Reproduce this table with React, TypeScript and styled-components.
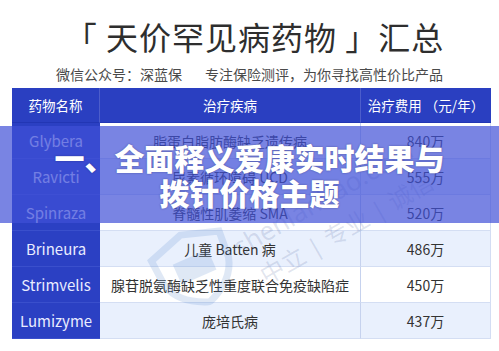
import React from 'react'
import styled, { createGlobalStyle } from 'styled-components'

type Row = {
  readonly name: string
  readonly disease: string
  readonly cost: string
}

const rows: Row[] = [
  { name: 'Glybera', disease: '脂蛋白脂肪酶缺乏遗传病', cost: '840万' },
  { name: 'Ravicti', disease: '尿素循环障碍 UCD', cost: '555万' },
  { name: 'Spinraza', disease: '脊髓性肌萎缩 SMA', cost: '520万' },
  { name: 'Brineura', disease: '儿童 Batten 病', cost: '486万' },
  { name: 'Strimvelis', disease: '腺苷脱氨酶缺乏性重度联合免疫缺陷症', cost: '450万' },
  { name: 'Lumizyme', disease: '庞培氏病', cost: '437万' }
]

const GlobalStyle = createGlobalStyle`
  html, body {
    margin: 0;
    padding: 0;
    background: #fff;
  }
  body {
    font-family: "Noto Sans CJK SC", "Noto Sans", sans-serif;
  }
`

const Page = styled.div`
  position: relative;
  width: 499px;
  height: 351px;
  overflow: hidden;
  background: #fff;
`

const Title = styled.h1`
  margin: 17px 0 0;
  padding-left: 10px;
  height: 38px;
  font-size: 32px;
  line-height: 38px;
  font-weight: 400;
  letter-spacing: 1px;
  color: #2e2e2e;
  text-align: center;
  white-space: pre;
`

const Subtitle = styled.div`
  margin-top: 9px;
  height: 20px;
  display: flex;
  justify-content: center;
  gap: 23px;
  font-size: 14px;
  line-height: 20px;
  color: #4a4a4a;
`

const Table = styled.div`
  position: relative;
  margin: 4px 0 0 12px;
  width: 479px;
  display: grid;
  grid-template-columns: 88px 261px 130px;
  grid-template-rows: 35px repeat(6, 36px);
  box-sizing: border-box;
`

const HeadCell = styled.div<{ $last?: boolean }>`
  display: flex;
  align-items: center;
  justify-content: center;
  background: #2a3fc1;
  color: #fff;
  font-size: 13.5px;
  border-right: ${p => (p.$last ? 'none' : '1px solid rgba(255, 255, 255, 0.16)')};
  border-bottom: 1px solid #2236b4;
  box-sizing: border-box;
`

const NameCell = styled.div`
  display: flex;
  align-items: center;
  justify-content: center;
  background: #2b40c3;
  color: #e9ecff;
  font-size: 15px;
  border-bottom: 1px solid #3a4fcc;
  box-sizing: border-box;
`

const BodyCell = styled.div<{ $alt: boolean; $last?: boolean }>`
  display: flex;
  align-items: center;
  justify-content: center;
  background: ${p => (p.$alt ? '#e9f0fd' : '#fff')};
  color: #333;
  font-size: 14px;
  border-bottom: 1px solid #d4def3;
  border-right: 1px solid ${p => (p.$last ? '#d3ddf3' : '#c6d2ee')};
  box-sizing: border-box;
  white-space: nowrap;
`

const Watermark = styled.div`
  position: absolute;
  left: 0;
  top: 0;
  width: 100%;
  height: 100%;
  pointer-events: none;
`

const WaterShield = styled.svg`
  position: absolute;
  left: 140px;
  top: 140px;
  transform: rotate(-24deg);
  opacity: 0.16;
`

const WaterText = styled.div<{ $x: number; $y: number; $size: number }>`
  position: absolute;
  left: ${p => p.$x}px;
  top: ${p => p.$y}px;
  transform: rotate(-30deg);
  transform-origin: left bottom;
  font-family: "Noto Sans", "Noto Sans CJK SC", sans-serif;
  font-size: ${p => p.$size}px;
  color: rgba(70, 90, 150, 0.16);
  white-space: pre;
`

const Band = styled.div`
  position: absolute;
  left: 0;
  right: 0;
  top: 126px;
  height: 97px;
  background: rgba(64, 80, 215, 0.7);
  display: flex;
  flex-direction: column;
  align-items: center;
  justify-content: center;
`

const BandLine = styled.div`
  font-size: 30px;
  line-height: 35px;
  font-weight: 900;
  color: #fff;
  text-shadow: 0 0 2px rgba(20, 20, 70, 0.45);
  white-space: nowrap;
`

const App = (): JSX.Element => {
  return (
    <Page>
      <GlobalStyle />
      <Title>{'「 天价罕见病药物 」汇总'}</Title>
      <Subtitle>
        <span>微信公众号：深蓝保</span>
        <span>专注保险测评，为你寻找高性价比产品</span>
      </Subtitle>
      <Table>
        <HeadCell>药物名称</HeadCell>
        <HeadCell>治疗疾病</HeadCell>
        <HeadCell $last>治疗费用 （元/年）</HeadCell>
        {rows.map((r, i) => (
          <React.Fragment key={r.name}>
            <NameCell>{r.name}</NameCell>
            <BodyCell $alt={i % 2 === 1}>{r.disease}</BodyCell>
            <BodyCell $alt={i % 2 === 1} $last>
              {r.cost}
            </BodyCell>
          </React.Fragment>
        ))}
        <Watermark>
          <WaterShield width="86" height="80" viewBox="0 0 86 80">
            <path
              d="M43 4 L80 16 L78 44 Q72 66 43 77 Q14 66 8 44 L6 16 Z"
              fill="none"
              stroke="#3f78c8"
              strokeWidth="7"
            />
            <rect x="24" y="28" width="38" height="22" fill="#3f78c8" />
          </WaterShield>
          <WaterText $x={232} $y={140} $size={26}>
            shenlanbao.com
          </WaterText>
          <WaterText $x={258} $y={168} $size={24}>
            {'中立 | 专业 | 诚信'}
          </WaterText>
        </Watermark>
      </Table>
      <Band>
        <BandLine>一、全面释义爱康实时结果与</BandLine>
        <BandLine>拨针价格主题</BandLine>
      </Band>
    </Page>
  )
}

export default App
